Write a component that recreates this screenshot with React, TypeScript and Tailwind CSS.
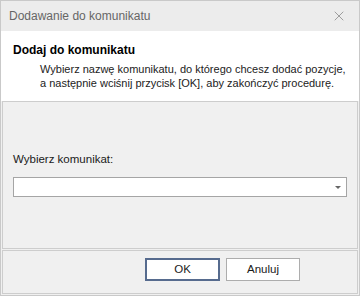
import { X } from "lucide-react"

function App() {
  return (
    <div
      className="w-[360px] h-[296px] flex flex-col bg-[#f0f0f0] border border-[#c9c9c9] text-[11.5px] text-[#1a1a1a]"
      style={{ fontFamily: '"Liberation Sans", Arial, sans-serif' }}
    >
      <div className="h-[30px] flex items-center justify-between pl-2 pr-3 bg-[#ececec]">
        <span className="text-[#666] text-[12px]">Dodawanie do komunikatu</span>
        <X size={16} strokeWidth={1.1} className="text-[#808080]" />
      </div>
      <div className="h-[70px] bg-white pl-3 pt-[10px]">
        <div className="font-bold text-[12px] text-black">Dodaj do komunikatu</div>
        <div className="pl-[27px] pt-[3px] leading-[14px] text-[#222] whitespace-nowrap text-[11px]">
          Wybierz nazwę komunikatu, do którego chcesz dodać pozycje,
          <br />
          a następnie wciśnij przycisk [OK], aby zakończyć procedurę.
        </div>
      </div>
      <div className="flex-1 flex flex-col px-[1px] pb-[1px]">
        <div className="flex-1 border border-[#cdcdcd] flex flex-col justify-end px-[10px] pb-[51px]">
          <div className="mb-[9px]">Wybierz komunikat:</div>
          <div className="h-[20px] bg-white border border-[#a5a5a5] flex items-center justify-end pr-[5px]">
            <div className="w-0 h-0 border-l-[3px] border-r-[3px] border-t-[3px] border-l-transparent border-r-transparent border-t-[#666]" />
          </div>
        </div>
        <div className="h-[44px] mt-[1px] border border-[#cdcdcd] flex items-center justify-end gap-[6px] pr-[57px] pb-[5px]">
          <button className="w-[75px] h-[23px] bg-white border-2 border-[#566b8e]">OK</button>
          <button className="w-[74px] h-[23px] bg-white border border-[#adadad]">Anuluj</button>
        </div>
      </div>
    </div>
  )
}

export default App
